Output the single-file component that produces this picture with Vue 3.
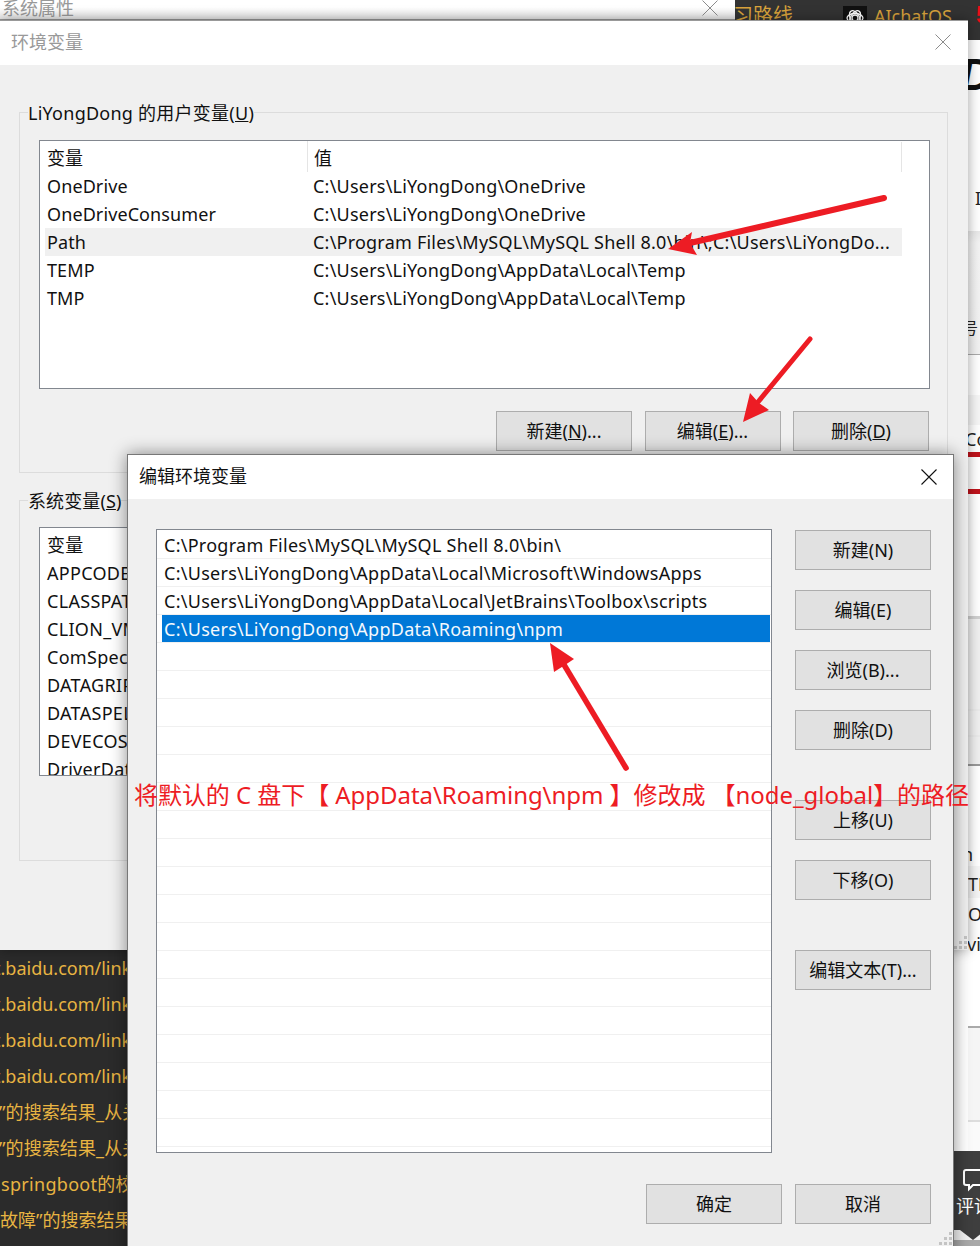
<script setup>
const userVars = [
  { name: 'OneDrive', value: 'C:\\Users\\LiYongDong\\OneDrive' },
  { name: 'OneDriveConsumer', value: 'C:\\Users\\LiYongDong\\OneDrive' },
  { name: 'Path', value: 'C:\\Program Files\\MySQL\\MySQL Shell 8.0\\bin\\;C:\\Users\\LiYongDo...', active: true },
  { name: 'TEMP', value: 'C:\\Users\\LiYongDong\\AppData\\Local\\Temp' },
  { name: 'TMP', value: 'C:\\Users\\LiYongDong\\AppData\\Local\\Temp' }
]
const sysVars = ['APPCODE_VM_OPTIONS', 'CLASSPATH', 'CLION_VM_OPTIONS', 'ComSpec', 'DATAGRIP_VM_OPTIONS', 'DATASPELL_VM_OPTIONS', 'DEVECOSTUDIO_VM_OPTIONS', 'DriverData']
const paths = [
  'C:\\Program Files\\MySQL\\MySQL Shell 8.0\\bin\\',
  'C:\\Users\\LiYongDong\\AppData\\Local\\Microsoft\\WindowsApps',
  'C:\\Users\\LiYongDong\\AppData\\Local\\JetBrains\\Toolbox\\scripts',
  'C:\\Users\\LiYongDong\\AppData\\Roaming\\npm'
]
const emptyRows = Array.from({ length: 18 }, (_, i) => i)
const links = [
  't.baidu.com/link?url', 't.baidu.com/link?url', 't.baidu.com/link?url', 't.baidu.com/link?url',
  '”的搜索结果_从关联', '”的搜索结果_从关联', 'springboot的校验', '故障”的搜索结果'
]
const sideButtons = [
  { label: '新建(N)' }, { label: '编辑(E)' }, { label: '浏览(B)...' }, { label: '删除(D)' },
  { label: '上移(U)', far: true }, { label: '下移(O)' }, { label: '编辑文本(T)...', far: true }
]
</script>

<template>
  <div class="desktop">
    <!-- page behind the dialogs -->
    <div class="page-top">
      <span class="page-link route">学习路线</span>
      <span class="logo">
        <svg width="24" height="24" viewBox="0 0 24 24" fill="none" stroke="#fff" stroke-width="1.3">
          <circle cx="12" cy="12" r="3" />
          <ellipse cx="12" cy="12" rx="8" ry="4.5" />
          <ellipse cx="12" cy="12" rx="8" ry="4.5" transform="rotate(60 12 12)" />
          <ellipse cx="12" cy="12" rx="8" ry="4.5" transform="rotate(120 12 12)" />
        </svg>
      </span>
      <span class="page-link name">AIchatOS</span>
      <b class="page-red">5</b>
    </div>

    <div class="page-side">
      <div class="s-a"><b class="s-big">D</b><span class="s-bar">I</span></div>
      <div class="s-b"><span class="s-small">号</span></div>
      <div class="s-c"><div class="s-c1"></div><div class="s-c2"><span>Co</span></div><div class="s-red"></div><div class="s-c3"></div><div class="s-red"></div></div>
      <div class="s-d"></div>
      <div class="s-e">
        <span class="s-t1">n</span>
        <span class="s-t2">TH</span>
        <span class="s-t3">O</span>
        <span class="s-t4">vid</span>
      </div>
      <div class="s-f"></div>
      <div class="s-g"></div>
    </div>

    <div class="page-links">
      <div v-for="(l, i) in links" :key="i" class="link-row" :class="{ 'link-in': i < 4, 'link-quote': i === 4 || i === 5, 'link-boot': i === 6 }">{{ l }}</div>
    </div>

    <div class="comment">
      <div class="comment-box">
        <svg class="bubble" width="24" height="24" viewBox="0 0 24 24" fill="none" stroke="#fff" stroke-width="2">
          <path d="M4 2h22v15H11l-4 4v-4H4a2 2 0 0 1-2-2V4a2 2 0 0 1 2-2z" />
        </svg>
        <span class="comment-text">评论</span>
      </div>
      <div class="comment-foot"><i class="notch"></i></div>
    </div>

    <!-- 系统属性 -->
    <div class="sysprops">
      <span class="sys-title">系统属性</span>
      <svg class="sys-x" width="16" height="16" viewBox="0 0 16 16" stroke="#8c8c8c" stroke-width="1"><path d="M.5.5l15 15M15.5.5l-15 15" /></svg>
    </div>

    <!-- 环境变量 -->
    <div class="env">
      <header class="env-title">
        <span>环境变量</span>
        <svg width="16" height="16" viewBox="0 0 16 16" stroke="#8c8c8c" stroke-width="1"><path d="M.5.5l15 15M15.5.5l-15 15" /></svg>
      </header>
      <section class="group group-user">
        <div class="legend">LiYongDong 的用户变量(<u>U</u>)</div>
        <div class="table">
          <div class="thead"><span class="c1">变量</span><span class="c2">值</span></div>
          <div v-for="v in userVars" :key="v.name" class="trow" :class="{ active: v.active }">
            <span class="c1">{{ v.name }}</span><span class="c2">{{ v.value }}</span>
          </div>
        </div>
        <div class="env-actions">
          <button class="btn">新建(<u>N</u>)...</button>
          <button class="btn">编辑(<u>E</u>)...</button>
          <button class="btn">删除(<u>D</u>)</button>
        </div>
      </section>
      <section class="group group-sys">
        <div class="legend">系统变量(<u>S</u>)</div>
        <div class="table">
          <div class="thead"><span class="c1">变量</span></div>
          <div v-for="v in sysVars" :key="v" class="trow"><span class="c1">{{ v }}</span></div>
        </div>
      </section>
      <div class="grip grip-env"><i v-for="n in 6" :key="n"></i></div>
    </div>

    <!-- 编辑环境变量 -->
    <div class="edit">
      <header class="edit-title">
        <span>编辑环境变量</span>
        <svg width="16" height="16" viewBox="0 0 16 16" stroke="#111" stroke-width="1.1"><path d="M.5.5l15 15M15.5.5l-15 15" /></svg>
      </header>
      <div class="edit-main">
        <div class="path-list">
          <div v-for="(p, i) in paths" :key="p" class="path-row" :class="{ selected: i === 3 }"><span>{{ p }}</span></div>
          <div v-for="n in emptyRows" :key="n" class="path-row"></div>
        </div>
        <div class="side-actions">
          <button v-for="b in sideButtons" :key="b.label" class="btn" :class="{ far: b.far }">{{ b.label }}</button>
        </div>
      </div>
      <div class="edit-footer">
        <button class="btn">确定</button>
        <button class="btn">取消</button>
      </div>
      <div class="grip grip-edit"><i v-for="n in 6" :key="n"></i></div>
    </div>

    <!-- annotations -->
    <svg class="marks" width="980" height="1246" viewBox="0 0 980 1246">
      <g stroke="#ed1c24" stroke-linecap="round" fill="none">
        <path d="M884 198L690 243" stroke-width="6" />
        <path d="M810 339L758 402" stroke-width="5" />
        <path d="M626 768L563 663" stroke-width="5.5" />
      </g>
      <g fill="#ed1c24">
        <path d="M668 249L692 232L690 243L697 255Z" />
        <path d="M743 422L750 393L759 403L769 410Z" />
        <path d="M550 643L574 659L565 665L554 672Z" />
      </g>
    </svg>
    <div class="note">将默认的 C 盘下【 AppData\Roaming\npm 】修改成 【node_global】的路径</div>
  </div>
</template>

<style scoped>
.desktop {
  position: relative;
  width: 980px;
  height: 1246px;
  overflow: hidden;
  background: #fff;
  font-family: "Noto Sans", "Noto Sans CJK SC", sans-serif;
  font-size: 18px;
  color: #111;
}
button { font: inherit; color: inherit; padding: 0 0 2px; }

/* background page */
.page-top {
  position: absolute; left: 735px; top: 0; width: 245px; height: 40px;
  background: #333; display: flex; align-items: flex-start; overflow: hidden;
}
.page-link { color: #d9a33c; font-size: 20px; line-height: 32px; white-space: nowrap; flex: none; }
.page-link.name { font-size: 18px; }
.route { width: 58px; display: flex; justify-content: flex-end; overflow: hidden; margin-right: 50px; }
.logo { width: 24px; height: 24px; margin: 6px 7px 0 0; background: #111; display: block; flex: none; }
.logo svg { display: block; }
.page-red { color: #e8101a; font-size: 24px; line-height: 30px; margin-left: 24px; font-family: "Liberation Sans", sans-serif; flex: none; }

.page-side {
  position: absolute; left: 968px; top: 40px; width: 12px; height: 1111px;
  display: flex; flex-direction: column; overflow: hidden; color: #222; white-space: nowrap;
}
.s-a { height: 192px; position: relative; background: #fff; }
.s-big { position: absolute; left: -8px; top: 10px; font: italic 900 44px/50px "Liberation Sans", sans-serif; color: #111; }
.s-bar { position: absolute; left: 7px; top: 146px; font: 18px/24px "Noto Sans", sans-serif; }
.s-b { height: 123px; background: linear-gradient(#e9e9e9, #f4f4f4 12px, #f2f2f2); position: relative; border-bottom: 1px solid #aaa; }
.s-small { position: absolute; left: -6px; top: 86px; font-size: 16px; line-height: 22px; }
.s-c { height: 262px; background: #fff; border-bottom: 3px solid #d0d0d0; display: flex; flex-direction: column; }
.s-c1 { height: 40px; }
.s-c2 { height: 57px; background: linear-gradient(#f6f6f6 30px, #fff 30px); overflow: hidden; }
.s-c2 span { display: block; margin: 32px 0 0 -3px; font-size: 18px; line-height: 24px; }
.s-red { height: 5px; background: #c0141c; flex: none; }
.s-c3 { height: 32px; flex: none; }
.s-d { height: 146px; background: linear-gradient(#f0f0f0 90px, #e6e6e6 91px, #f0f0f0 92px, #f0f0f0 116px, #e6e6e6 117px, #f0f0f0 118px); border-bottom: 2px solid #999; }
.s-e { height: 260px; flex: none; background: linear-gradient(#fff 100px, #f6f6f6 100px, #f6f6f6 132px, #fff 132px); position: relative; border-bottom: 2px solid #aaa; }
.s-e span { position: absolute; font-size: 18px; line-height: 24px; }
.s-t1 { left: -6px; top: 76px; }
.s-t2 { left: 0; top: 106px; }
.s-t3 { left: 0; top: 136px; }
.s-t4 { left: -1px; top: 166px; }
.s-f { height: 92px; flex: none; background: #f5f5f5; border-bottom: 2px solid #ddd; }
.s-g { height: 29px; flex: none; background: #fafafa; }

.page-links {
  position: absolute; left: 0; top: 950px; width: 140px; height: 296px;
  background: #2b2b2b; overflow: hidden;
}
.link-row { height: 36px; line-height: 36px; color: #e8b442; white-space: nowrap; }
.link-in { margin-left: -6px; }
.link-quote { margin-left: -1px; letter-spacing: .1px; }
.link-boot { margin-left: 1px; letter-spacing: .3px; }

.comment { position: absolute; left: 953px; top: 1151px; width: 27px; height: 95px; overflow: hidden; }
.comment-box { height: 79px; background: #3e3e3e; position: relative; }
.bubble { position: absolute; left: 9px; top: 17px; }
.comment-text { position: absolute; left: 3px; top: 42px; color: #fff; font-size: 18px; line-height: 26px; white-space: nowrap; width: 40px; }
.comment-foot { height: 16px; position: relative; background: linear-gradient(#f2f2f2 10px, #a9a9a9 10px); }
.notch { position: absolute; left: 7px; top: 0; border: 13px solid transparent; border-bottom: 0; border-top: 10px solid #3e3e3e; }

/* windows */
.sysprops {
  position: absolute; left: 0; top: -20px; width: 735px; height: 40px;
  background: linear-gradient(#fff 70%, #e9e9e9); border-bottom: 1px solid #9a9a9a;
  box-sizing: border-box;
}
.sys-title { position: absolute; left: 2px; top: 15px; font-size: 18px; line-height: 26px; color: #999; }
.sys-x { position: absolute; left: 702px; top: 20px; }

.env {
  position: absolute; left: 0; top: 20px; width: 968px; height: 930px;
  background: #f0f0f0; box-shadow: 0 0 12px rgba(0, 0, 0, .38); border-top: 1px solid #999; box-sizing: border-box;
}
.env-title {
  height: 44px; background: #fff; display: flex; align-items: center; justify-content: space-between;
  padding: 0 17px 0 11px; color: #999;
}
.env-title span { margin-bottom: 4px; }
.env-title svg { margin-bottom: 2px; }
.group { margin: 0 20px 0 19px; border: 1px solid #dcdcdc; box-sizing: border-box; padding: 0 17px 0 19px; }
.group-user { margin-top: 47px; height: 361px; }
.group-sys { margin-top: 27px; height: 361px; }
.legend {
  width: fit-content; height: 28px; line-height: 28px; margin: -14px 0 13px -11px;
  background: #f0f0f0; white-space: nowrap; letter-spacing: .25px;
}
.group-sys .legend { margin-bottom: 12px; letter-spacing: .1px; }
.table {
  height: 249px; box-sizing: border-box; border: 1px solid #82878f; background: #fff; overflow: hidden;
  padding-left: 5px; padding-right: 27px;
}
.thead, .trow { display: flex; white-space: nowrap; }
.thead { height: 31px; line-height: 35px; position: relative; }
.thead .c2 { border-left: 1px solid #e5e5e5; }
.thead::after { content: ""; position: absolute; right: 0; top: 1px; bottom: 0; border-right: 1px solid #e5e5e5; }
.group-sys .thead::after { display: none; }
.c1 { width: 260px; flex: none; padding-left: 2px; letter-spacing: .1px; }
.group-sys .c1 { letter-spacing: .3px; }
.c2 { padding-left: 6px; letter-spacing: .22px; }
.trow { height: 28px; line-height: 28px; }
.trow.active { background: #f0f0f0; }
.env-actions { display: flex; justify-content: flex-end; gap: 12.5px; margin: 22px 1px 0 0; }
.btn {
  width: 136px; height: 40px; box-sizing: border-box; background: #e1e1e1;
  border: 1px solid #adadad; white-space: nowrap; display: block;
}
.grip { position: absolute; display: grid; grid-template-columns: repeat(3, 3px); gap: 2px; }
.grip i { width: 3px; height: 3px; background: #c4c4c4; }
.grip i:nth-child(1) { grid-column: 3; }
.grip i:nth-child(2) { grid-column: 2; }
.grip i:nth-child(4) { grid-column: 1; }
.grip-env { right: 1px; bottom: 1px; }

.edit {
  position: absolute; left: 127px; top: 454px; width: 827px; height: 806px; box-sizing: border-box;
  background: #f0f0f0; border: 1px solid #777; box-shadow: 0 0 16px rgba(0, 0, 0, .45);
}
.edit-title {
  height: 44px; background: #fff; display: flex; align-items: center; justify-content: space-between;
  padding: 0 16px 0 11px;
}
.edit-title span { margin-bottom: 4px; }
.edit-main { display: flex; padding: 30px 22px 0 28px; }
.path-list {
  width: 616px; height: 624px; box-sizing: border-box; background: #fff;
  border: 1px solid #82878f; padding-top: 1px; overflow: hidden; margin-right: 23px;
}
.path-row { height: 28px; box-sizing: border-box; border-bottom: 1px solid #f0f0f0; padding-right: 1px; white-space: nowrap; line-height: 29px; letter-spacing: .27px; }
.path-row span { display: block; margin-left: 5px; padding-left: 2px; height: 27px; }
.path-row.selected span { background: #0078d7; color: #f4f9fd; }
.side-actions { display: flex; flex-direction: column; gap: 20px; padding-top: 1px; }
.far { margin-top: 30px; }
.edit-footer { display: flex; justify-content: flex-end; gap: 13px; margin-top: 31px; padding-right: 22px; }
.grip-edit { right: 1px; bottom: 14px; }

.marks { position: absolute; left: 0; top: 0; pointer-events: none; }
.note {
  position: absolute; left: 134px; top: 778px; font-size: 24px; line-height: 34px;
  color: #ed1c24; white-space: nowrap; letter-spacing: -.05px;
}
</style>
